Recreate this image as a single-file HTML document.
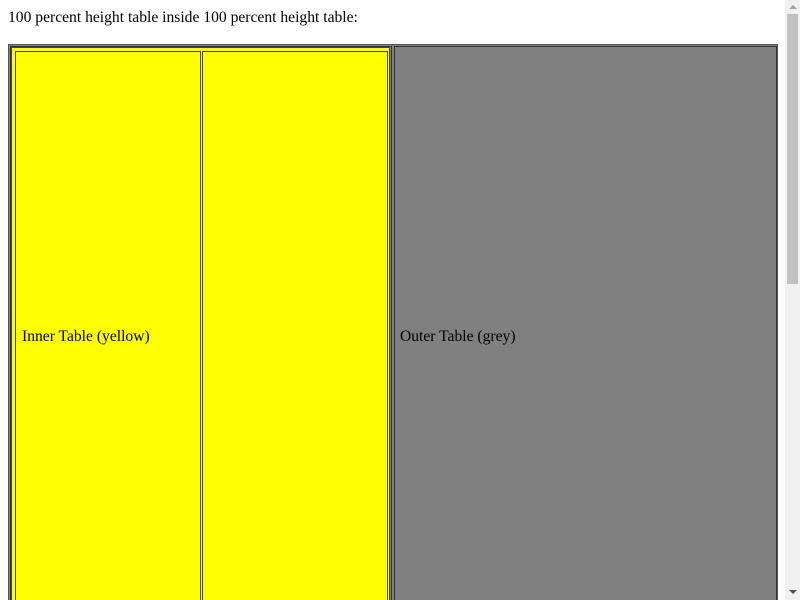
<!DOCTYPE html>
<html style="overflow:hidden;width:800px;height:600px"><head><style>
body{margin:0;width:800px;height:600px;overflow:hidden;position:relative;font-family:"Liberation Serif",serif;font-size:15.6px;background:#fff}
.a{position:absolute;box-sizing:border-box}
.t{position:absolute;top:327px;line-height:20px}
</style></head><body>
<div class="a" style="left:8px;top:9px;line-height:18px">100 percent height table inside 100 percent height table:</div>
<div class="a" style="left:8px;top:44px;width:770px;height:556px;background:#808080;border:1px solid #555;border-bottom:none"></div>
<div class="a" style="left:10px;top:46px;width:382px;height:554px;border:1px solid #333;border-bottom:none"></div>
<div class="a" style="left:11px;top:47px;width:379px;height:553px;background:#ff0;border:1px solid #444;border-bottom:none"></div>
<div class="a" style="left:15px;top:51px;width:186px;height:549px;border:1px solid #444;border-bottom:none"></div>
<div class="a" style="left:202px;top:51px;width:186px;height:549px;border:1px solid #444;border-bottom:none"></div>
<div class="a" style="left:394px;top:46px;width:383px;height:554px;border:1px solid #333;border-bottom:none"></div>
<div class="t" style="left:22px">Inner Table (yellow)</div>
<div class="t" style="left:400px">Outer Table (grey)</div>
<div class="a" style="left:785px;top:0;width:15px;height:600px;background:#f1f1f1"></div>
<div class="a" style="left:787px;top:14px;width:11px;height:270px;background:#c1c1c1"></div>
<div class="a" style="left:789px;top:5px;width:0;height:0;border-left:4px solid transparent;border-right:4px solid transparent;border-bottom:4px solid #a3a3a3"></div>
<div class="a" style="left:789px;top:590px;width:0;height:0;border-left:4px solid transparent;border-right:4px solid transparent;border-top:4px solid #505050"></div>
</body></html>
